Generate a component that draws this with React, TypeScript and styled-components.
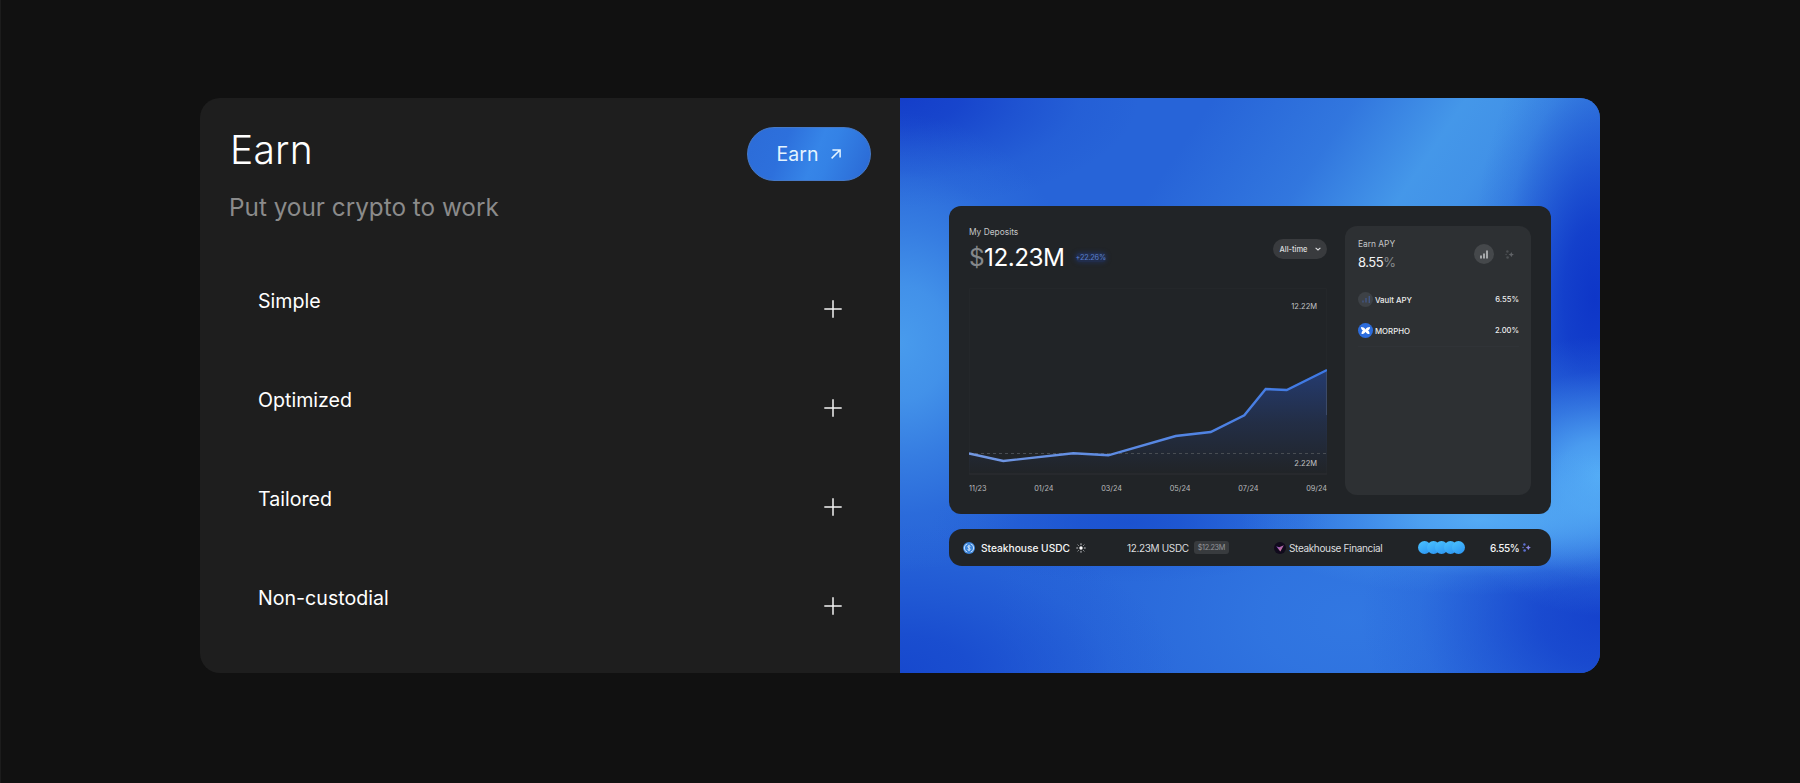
import styled, { createGlobalStyle } from 'styled-components';

const GlobalStyle = createGlobalStyle`
  *, *::before, *::after {
    box-sizing: border-box;
  }

  body {
    margin: 0;
    background: #111111;
    font-family: Inter, 'Liberation Sans', sans-serif;
    -webkit-font-smoothing: antialiased;
  }
`;

// Soft elliptical blob with an eased falloff, so overlapping blobs show no edge.
const glow = (size: string, at: string, rgb: string, alpha = 1) =>
  `radial-gradient(ellipse ${size} at ${at},
    rgba(${rgb}, ${alpha}) 0%,
    rgba(${rgb}, ${alpha * 0.82}) 25%,
    rgba(${rgb}, ${alpha * 0.45}) 50%,
    rgba(${rgb}, ${alpha * 0.13}) 75%,
    rgba(${rgb}, 0) 100%)`;

const Page = styled.main`
  height: 783px;
  padding: 98px 200px 110px 199px;
  border-left: 1px solid #1c1c1c;
  overflow: hidden;
`;

const Section = styled.section`
  display: grid;
  grid-template-columns: repeat(2, minmax(0, 1fr));
  width: 1400px;
  height: 575px;
  border-radius: 20px;
  overflow: hidden;
  background: #1e1e1e;
`;

const Info = styled.div`
  display: flex;
  flex-direction: column;
  padding: 29px 29px 0 30px;
`;

const InfoHeader = styled.header`
  display: flex;
  justify-content: space-between;
  align-items: flex-start;
  height: 132px;
`;

const Title = styled.h2`
  margin: 0;
  color: #ffffff;
  font-size: 39px;
  font-weight: 300;
  line-height: 46px;
  letter-spacing: 0.2px;
`;

const Subtitle = styled.p`
  margin: 19px 0 0 -1px;
  color: #8b8b8b;
  font-size: 24.3px;
  font-weight: 400;
  line-height: 30px;
  letter-spacing: 0;
`;

const EarnButton = styled.button`
  display: flex;
  align-items: center;
  justify-content: center;
  gap: 13px;
  width: 124px;
  height: 54px;
  padding: 0;
  border: 1px solid #4579c8;
  border-radius: 27px;
  background: linear-gradient(112deg, #2c6cd8 0%, #2d70dc 30%, #3685e8 55%, #3482e6 65%, #2a68d4 100%);
  color: #e4f4ff;
  font-family: inherit;
  font-size: 19.5px;
  font-weight: 400;
  cursor: pointer;
`;

const FeatureList = styled.ul`
  display: flex;
  flex-direction: column;
  margin: 0;
  padding: 0;
  list-style: none;
`;

const Feature = styled.li`
  display: flex;
  justify-content: space-between;
  height: 99.1px;
  padding: 30px 29px 0 28px;
  color: #ffffff;
  font-size: 19.6px;
  line-height: 24px;
`;

const FeatureIcon = styled.svg`
  width: 18px;
  height: 18px;
  margin-top: 11px;
`;

const Showcase = styled.div`
  display: flex;
  flex-direction: column;
  gap: 15px;
  padding: 108px 49px 0;
  background:
    ${glow('240px 75px', '580px 422px', '86, 174, 246', 0.95)},
    ${glow('160px 140px', '700px 378px', '84, 172, 246')},
    ${glow('125px 290px', '695px 200px', '14, 54, 200')},
    ${glow('190px 230px', '0px 245px', '74, 158, 238', 0.95)},
    linear-gradient(124deg, rgba(70, 154, 234, 0) 260px, rgba(70, 154, 234, 0.35) 380px, rgba(70, 154, 234, 0.95) 470px, rgba(70, 154, 234, 0.85) 520px, rgba(70, 154, 234, 0.4) 600px, rgba(70, 154, 234, 0) 690px) top / 700px 260px no-repeat,
    ${glow('240px 110px', '0px 0px', '18, 58, 200', 0.9)},
    ${glow('240px 180px', '700px 520px', '18, 60, 202', 0.85)},
    ${glow('280px 150px', '0px 575px', '20, 68, 204', 0.85)},
    ${glow('200px 60px', '230px 425px', '26, 80, 206', 0.9)},
    ${glow('360px 240px', '450px 520px', '52, 124, 228', 0.8)},
    #2764d8;
`;

const Dashboard = styled.div`
  display: flex;
  justify-content: space-between;
  height: 308px;
  padding: 20px 19px 0 20px;
  border-radius: 12px;
  background: #212427;
`;

const Deposits = styled.div`
  display: flex;
  flex-direction: column;
  width: 358px;
`;

const DepositsHeader = styled.div`
  display: flex;
  justify-content: space-between;
  height: 62px;
`;

const Label = styled.div`
  color: #c4c6c8;
  font-size: 8.4px;
  line-height: 12px;
`;

const AmountRow = styled.div`
  display: flex;
  align-items: center;
  gap: 11px;
  margin-top: 4px;
`;

const Amount = styled.div`
  color: #ffffff;
  font-size: 24.3px;
  line-height: 30px;
  letter-spacing: -0.5px;
`;

const Muted = styled.span`
  color: #85888b;
`;

const Change = styled.span`
  border-radius: 4px;
  background: #212d4b;
  box-shadow: 0 0 4px 1px #212d4b;
  color: #5b80cf;
  font-size: 7.3px;
  line-height: 9px;
  letter-spacing: -0.2px;
`;

const RangeButton = styled.button`
  display: flex;
  align-items: center;
  justify-content: center;
  gap: 7px;
  width: 54px;
  height: 20px;
  margin: 13px 0 0;
  padding: 0;
  border: 0;
  border-radius: 10px;
  background: #393b3e;
  color: #dcdddf;
  font-family: inherit;
  font-size: 7.5px;
  font-weight: 450;
`;

const Chart = styled.svg`
  display: block;
  width: 358px;
  height: 190px;
`;

const ChartText = styled.text`
  fill: #c3c5c7;
  font-size: 7.5px;
  text-anchor: end;
`;

const Axis = styled.div`
  display: flex;
  justify-content: space-between;
  margin-top: 5px;
  color: #b9bbbd;
  font-size: 7.3px;
  line-height: 11px;
`;

const ApyPanel = styled.aside`
  display: flex;
  flex-direction: column;
  width: 186px;
  height: 269px;
  margin-right: 1px;
  padding: 12px 12px 0 13px;
  border-radius: 12px;
  background: #2d3033;
`;

const ApyHeader = styled.div`
  display: flex;
  justify-content: space-between;
  height: 46px;
`;

const ApyValue = styled.div`
  margin-top: 4px;
  color: #f2f3f4;
  font-size: 13px;
  line-height: 17px;
  letter-spacing: -0.5px;
`;

const ToggleGroup = styled.div`
  display: flex;
  gap: 5px;
  margin-top: 6px;
`;

const Toggle = styled.span<{ $active?: boolean }>`
  display: grid;
  place-items: center;
  width: 20px;
  height: 20px;
  border-radius: 50%;
  background: ${({ $active }) => ($active ? '#45484b' : 'transparent')};
`;

const ApyRow = styled.div`
  display: flex;
  align-items: center;
  gap: 2px;
  height: 31px;
  color: #eceded;
  font-size: 7.8px;
  font-weight: 500;
`;

const ApyRate = styled.span`
  margin-left: auto;
  font-size: 7.6px;
`;

const Divider = styled.hr`
  width: 100%;
  margin: 0;
  border: 0;
  border-top: 1px solid #303337;
`;

const VaultBar = styled.div`
  display: flex;
  align-items: center;
  height: 37px;
  padding: 0 20px 0 14px;
  border-radius: 13px;
  background: #212427;
  color: #dcdddf;
  font-size: 10px;
  letter-spacing: -0.35px;
`;

const Cell = styled.div<{ $width: number; $gap: number }>`
  display: flex;
  align-items: center;
  gap: ${({ $gap }) => $gap}px;
  flex: 0 0 ${({ $width }) => $width}px;
  white-space: nowrap;
`;

const Strong = styled.span`
  color: #f4f5f5;
  font-weight: 500;
`;

const VaultName = styled(Strong)`
  font-size: 10.2px;
  letter-spacing: 0;
`;

const UsdBadge = styled.span`
  padding: 0 4px;
  border-radius: 3px;
  background: #383b3e;
  color: #94969a;
  font-size: 7.3px;
  line-height: 13px;
`;

const Dots = styled.div`
  display: flex;
`;

const Dot = styled.span`
  width: 13px;
  height: 13px;
  border-radius: 50%;
  background: linear-gradient(150deg, #4cc4ff, #2b93f2);

  & + & {
    margin-left: -4.5px;
  }
`;

const features = ['Simple', 'Optimized', 'Tailored', 'Non-custodial'];

const months = ['11/23', '01/24', '03/24', '05/24', '07/24', '09/24'];

const linePoints =
  '0,165.5 34.3,173 104.3,165.3 139.3,167.3 206.7,148 241.7,144 275.3,127.3 296.7,101 317.7,102 358,82';

const PlusIcon = () => (
  <FeatureIcon viewBox="0 0 18 18">
    <path d="M9 0.3v17.4M0.3 9h17.4" stroke="#f4f4f4" strokeWidth="1.5" />
  </FeatureIcon>
);

const ArrowIcon = () => (
  <svg width="10" height="10" viewBox="0 0 10 10" fill="none">
    <path d="M0.6 9.4 9 1M1.4 0.9H9.1V8.6" stroke="#e4f4ff" strokeWidth="1.5" />
  </svg>
);

const BarsIcon = ({ color }: { color: string }) => (
  <svg width="8" height="9" viewBox="0 0 8 9">
    <path d="M1 8.5v-3M4 8.5V3.5M7 8.5V0.5" stroke={color} strokeWidth="1.3" />
  </svg>
);

const SparkIcon = ({ color, core }: { color: string; core: string }) => (
  <svg width="9" height="9" viewBox="0 0 9 9">
    <path d="M6.3 2l.8 1.8 1.8.8-1.8.8-.8 1.8-.8-1.8-1.8-.8 1.8-.8z" fill={core} />
    <circle cx="2.4" cy="1.5" r="1.2" fill={color} />
    <circle cx="1.1" cy="4.5" r="0.8" fill={color} />
    <circle cx="2.6" cy="7.5" r="1.3" fill={color} />
  </svg>
);

const VaultIcon = () => (
  <svg width="15" height="15" viewBox="0 0 15 15">
    <circle cx="7.5" cy="7.5" r="7.5" fill="#3d4146" />
    <path d="M5 10.5V8.5M8 10.5V6M11.3 11V4" stroke="#41588a" strokeWidth="1.3" />
  </svg>
);

const MorphoIcon = () => (
  <svg width="15" height="15" viewBox="0 0 15 15">
    <circle cx="7.5" cy="7.5" r="7.5" fill="#2c6cdc" />
    <path
      d="M3 4C5 4 6.6 4.8 7.5 6.4C8.4 4.8 10 4 12 4C12 5.9 11.200 7 10 7.500C11 8 11.500 9.200 11.500 11C9.500 11 8.200 10.200 7.500 8.700C6.800 10.200 5.500 11 3.500 11C3.500 9.200 4 8 5 7.500C3.800 7 3 5.900 3 4Z"
      fill="#ffffff"
    />
  </svg>
);

const UsdcIcon = () => (
  <svg width="12" height="12" viewBox="0 0 12 12" fill="none">
    <circle cx="6" cy="6" r="6" fill="#3d86dc" />
    <path d="M4.3 1.9a4.3 4.3 0 0 0 0 8.2M7.7 1.9a4.3 4.3 0 0 1 0 8.2" stroke="#d8ebff" strokeWidth="0.9" />
    <path
      d="M7.3 4.6C7 3.5 4.7 3.6 4.7 4.8S7.3 5.9 7.3 7.2 4.9 8.5 4.6 7.3M6 2.9v6.2"
      stroke="#e6f3ff"
      strokeWidth="0.8"
    />
  </svg>
);

const SunIcon = () => (
  <svg width="10" height="10" viewBox="0 0 10 10">
    <circle cx="5" cy="5" r="1.7" fill="#ffffff" />
    <path
      d="M5 .3v1.8M5 7.9v1.8M.3 5h1.8M7.900 5h1.800M1.700 1.700l.9.9M7.400 7.400l.9.9M8.300 1.700l-.9.9M2.600 7.400l-.9.9"
      stroke="#d6d8da"
      strokeWidth="0.9"
    />
  </svg>
);

const CuratorIcon = () => (
  <svg width="12" height="12" viewBox="0 0 12 12">
    <defs>
      <linearGradient id="curator" x1="0" y1="0" x2="1" y2="1">
        <stop offset="0" stopColor="#7345c9" />
        <stop offset="1" stopColor="#f08a8a" />
      </linearGradient>
    </defs>
    <circle cx="6" cy="6" r="6" fill="#100a1c" />
    <path d="M2.2 4.3l3 .9L9.8 3.2 6.3 9.6z" fill="url(#curator)" />
  </svg>
);

const DepositsChart = () => (
  <Chart viewBox="0 0 358 190">
    <defs>
      <linearGradient id="area" x1="0" y1="82" x2="0" y2="186" gradientUnits="userSpaceOnUse">
        <stop offset="0" stopColor="#26458f" stopOpacity="0.7" />
        <stop offset="0.5" stopColor="#26458f" stopOpacity="0.3" />
        <stop offset="1" stopColor="#26458f" stopOpacity="0" />
      </linearGradient>
      <linearGradient id="line" x1="0" y1="0" x2="358" y2="0" gradientUnits="userSpaceOnUse">
        <stop offset="0" stopColor="#7398e2" />
        <stop offset="1" stopColor="#3d78e4" />
      </linearGradient>
    </defs>
    <path d="M0.5 0.5H357.5V186H0.5Z" fill="none" stroke="#24272a" />
    <polygon points={`${linePoints} 358,186 0,186`} fill="url(#area)" />
    <path d="M0 165.5H358" stroke="#484d53" strokeDasharray="3 3" />
    <path d="M0 186H358" stroke="#2c2f32" />
    <path d="M357.5 84V127" stroke="#3c4a68" />
    <polyline points={linePoints} fill="none" stroke="url(#line)" strokeWidth="2.4" />
    <ChartText x="348" y="20.5">12.22M</ChartText>
    <ChartText x="348" y="178">2.22M</ChartText>
  </Chart>
);

const App = () => (
  <>
    <GlobalStyle />
    <Page>
      <Section>
        <Info>
          <InfoHeader>
            <div>
              <Title>Earn</Title>
              <Subtitle>Put your crypto to work</Subtitle>
            </div>
            <EarnButton>
              Earn
              <ArrowIcon />
            </EarnButton>
          </InfoHeader>
          <FeatureList>
            {features.map((feature) => (
              <Feature key={feature}>
                {feature}
                <PlusIcon />
              </Feature>
            ))}
          </FeatureList>
        </Info>
        <Showcase>
          <Dashboard>
            <Deposits>
              <DepositsHeader>
                <div>
                  <Label>My Deposits</Label>
                  <AmountRow>
                    <Amount>
                      <Muted>$</Muted>12.23M
                    </Amount>
                    <Change>+22.26%</Change>
                  </AmountRow>
                </div>
                <RangeButton>
                  All-time
                  <svg width="6" height="4" viewBox="0 0 6 4" fill="none">
                    <path d="M0.6 0.8 3 3 5.4 0.8" stroke="#dcdddf" strokeWidth="1.1" />
                  </svg>
                </RangeButton>
              </DepositsHeader>
              <DepositsChart />
              <Axis>
                {months.map((month) => (
                  <span key={month}>{month}</span>
                ))}
              </Axis>
            </Deposits>
            <ApyPanel>
              <ApyHeader>
                <div>
                  <Label>Earn APY</Label>
                  <ApyValue>
                    8.55<Muted>%</Muted>
                  </ApyValue>
                </div>
                <ToggleGroup>
                  <Toggle $active>
                    <BarsIcon color="#dcdddf" />
                  </Toggle>
                  <Toggle>
                    <SparkIcon color="#4c4f53" core="#606367" />
                  </Toggle>
                </ToggleGroup>
              </ApyHeader>
              <ApyRow>
                <VaultIcon />
                Vault APY
                <ApyRate>6.55%</ApyRate>
              </ApyRow>
              <ApyRow>
                <MorphoIcon />
                MORPHO
                <ApyRate>2.00%</ApyRate>
              </ApyRow>
              <Divider />
            </ApyPanel>
          </Dashboard>
          <VaultBar>
            <Cell $width={164} $gap={6}>
              <UsdcIcon />
              <VaultName>Steakhouse USDC</VaultName>
              <SunIcon />
            </Cell>
            <Cell $width={147} $gap={5}>
              12.23M USDC
              <UsdBadge>$12.23M</UsdBadge>
            </Cell>
            <Cell $width={144} $gap={3}>
              <CuratorIcon />
              Steakhouse Financial
            </Cell>
            <Cell $width={72} $gap={0}>
              <Dots>
                {[0, 1, 2, 3, 4].map((index) => (
                  <Dot key={index} />
                ))}
              </Dots>
            </Cell>
            <Cell $width={40} $gap={3}>
              <Strong>6.55%</Strong>
              <SparkIcon color="#5b6fd0" core="#8a86e0" />
            </Cell>
          </VaultBar>
        </Showcase>
      </Section>
    </Page>
  </>
);

export default App;
